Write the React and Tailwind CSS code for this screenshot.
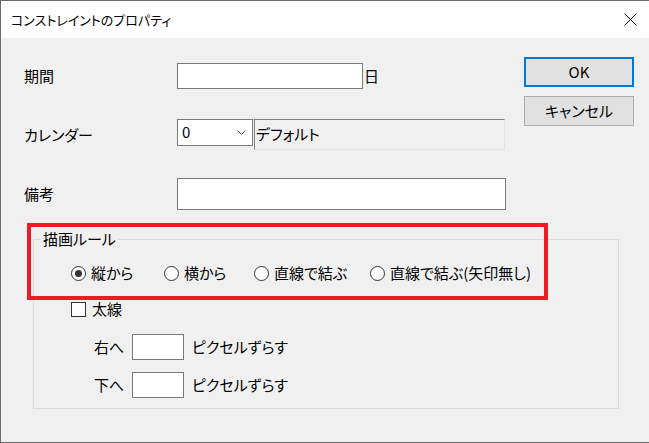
import React from 'react';

const font = "font-['Noto_Sans_CJK_JP','Noto_Sans_CJK_SC',sans-serif] [font-feature-settings:'palt']";

function Radio({ checked, label, className }) {
  return (
    <div className={`flex items-center h-[16px] ${className || ''}`}>
      <div className="w-[15px] h-[15px] rounded-full border border-[#333] bg-white flex items-center justify-center">
        {checked && <div className="w-[7px] h-[7px] rounded-full bg-[#333]" />}
      </div>
      <span className="ml-[5px]">{label}</span>
    </div>
  );
}

function ShiftRow({ label, className }) {
  return (
    <div className={`flex items-center h-[26px] ml-[60px] ${className || ''}`}>
      <span className="w-[38px]">{label}</span>
      <div className="w-[52px] h-[26px] bg-white border border-[#7a7a7a]" />
      <span className="ml-[8px]">ピクセルずらす</span>
    </div>
  );
}

export default function App() {
  return (
    <div className={`relative w-[649px] h-[443px] bg-[#f0f0f0] flex flex-col border-t border-l border-b border-[#6b6b6b] text-black overflow-hidden ${font}`}>
      {/* Title bar */}
      <div className="h-[37px] bg-white flex items-center justify-between pl-[10px] pr-[12px] shrink-0">
        <span className="text-[13px]">コンストレイントのプロパティ</span>
        <svg width="13" height="13" viewBox="0 0 13 13" className="text-black">
          <path d="M0.5 0.5 L12.5 12.5 M12.5 0.5 L0.5 12.5" stroke="currentColor" strokeWidth="1" fill="none" />
        </svg>
      </div>

      {/* Form */}
      <div className="flex text-[15px]">
        <div className="flex flex-col pl-[23px] pt-[25px]">
          <div className="flex items-center h-[26px]">
            <span className="w-[153px]">期間</span>
            <div className="w-[186px] h-[26px] bg-white border border-[#7a7a7a]" />
            <span className="ml-[1px]">日</span>
          </div>

          <div className="flex items-center h-[32px] mt-[30px]">
            <span className="w-[153px]">カレンダー</span>
            <div className="flex items-start h-full">
              <div className="w-[76px] h-[27px] bg-white border border-[#7a7a7a] flex items-center pl-[4px]">
                <span>0</span>
                <svg width="9" height="5" viewBox="0 0 9 5" className="ml-auto mr-[6px]">
                  <path d="M0.5 0.5 L4.5 4.5 L8.5 0.5" stroke="#555" strokeWidth="1" fill="none" />
                </svg>
              </div>
              <div className="ml-[1px] w-[251px] h-[31px] border border-t-[#828282] border-l-[#828282] border-r-[#e3e3e3] border-b-[#e3e3e3] flex items-center pl-[1px]">
                デフォルト
              </div>
            </div>
          </div>

          <div className="flex items-center h-[32px] mt-[27px]">
            <span className="w-[153px]">備考</span>
            <div className="w-[329px] h-[32px] bg-white border border-[#7a7a7a]" />
          </div>
        </div>

        <div className="ml-auto mr-[15px] mt-[19px] flex flex-col">
          <button className="w-[110px] h-[30px] border-2 border-[#0078d7] bg-[#e1e1e1] flex items-center justify-center">
            OK
          </button>
          <button className="mt-[9px] w-[110px] h-[30px] border border-[#adadad] bg-[#e1e1e1] flex items-center justify-center">
            キャンセル
          </button>
        </div>
      </div>

      {/* Group box */}
      <fieldset className="ml-[32px] mt-[21px] w-[586px] h-[178px] border border-[#dcdcdc] text-[15px]">
        <legend className="ml-[7px] px-[2px] leading-[16px]">描画ルール</legend>
        <div className="flex ml-[37px] mt-[18px]">
          <Radio checked label="縦から" className="w-[93px]" />
          <Radio label="横から" className="w-[90px]" />
          <Radio label="直線で結ぶ" className="w-[116px]" />
          <Radio label="直線で結ぶ(矢印無し)" />
        </div>
        <div className="flex items-center h-[16px] ml-[37px] mt-[20px]">
          <div className="w-[15px] h-[15px] bg-white border border-[#333]" />
          <span className="ml-[6px]">太線</span>
        </div>
        <ShiftRow label="右へ" className="mt-[17px]" />
        <ShiftRow label="下へ" className="mt-[12px]" />
      </fieldset>

      {/* annotation highlight */}
      <div className="absolute left-[26px] top-[222px] w-[521px] h-[77px] border-4 border-[#ed1c24] pointer-events-none" />
    </div>
  );
}
